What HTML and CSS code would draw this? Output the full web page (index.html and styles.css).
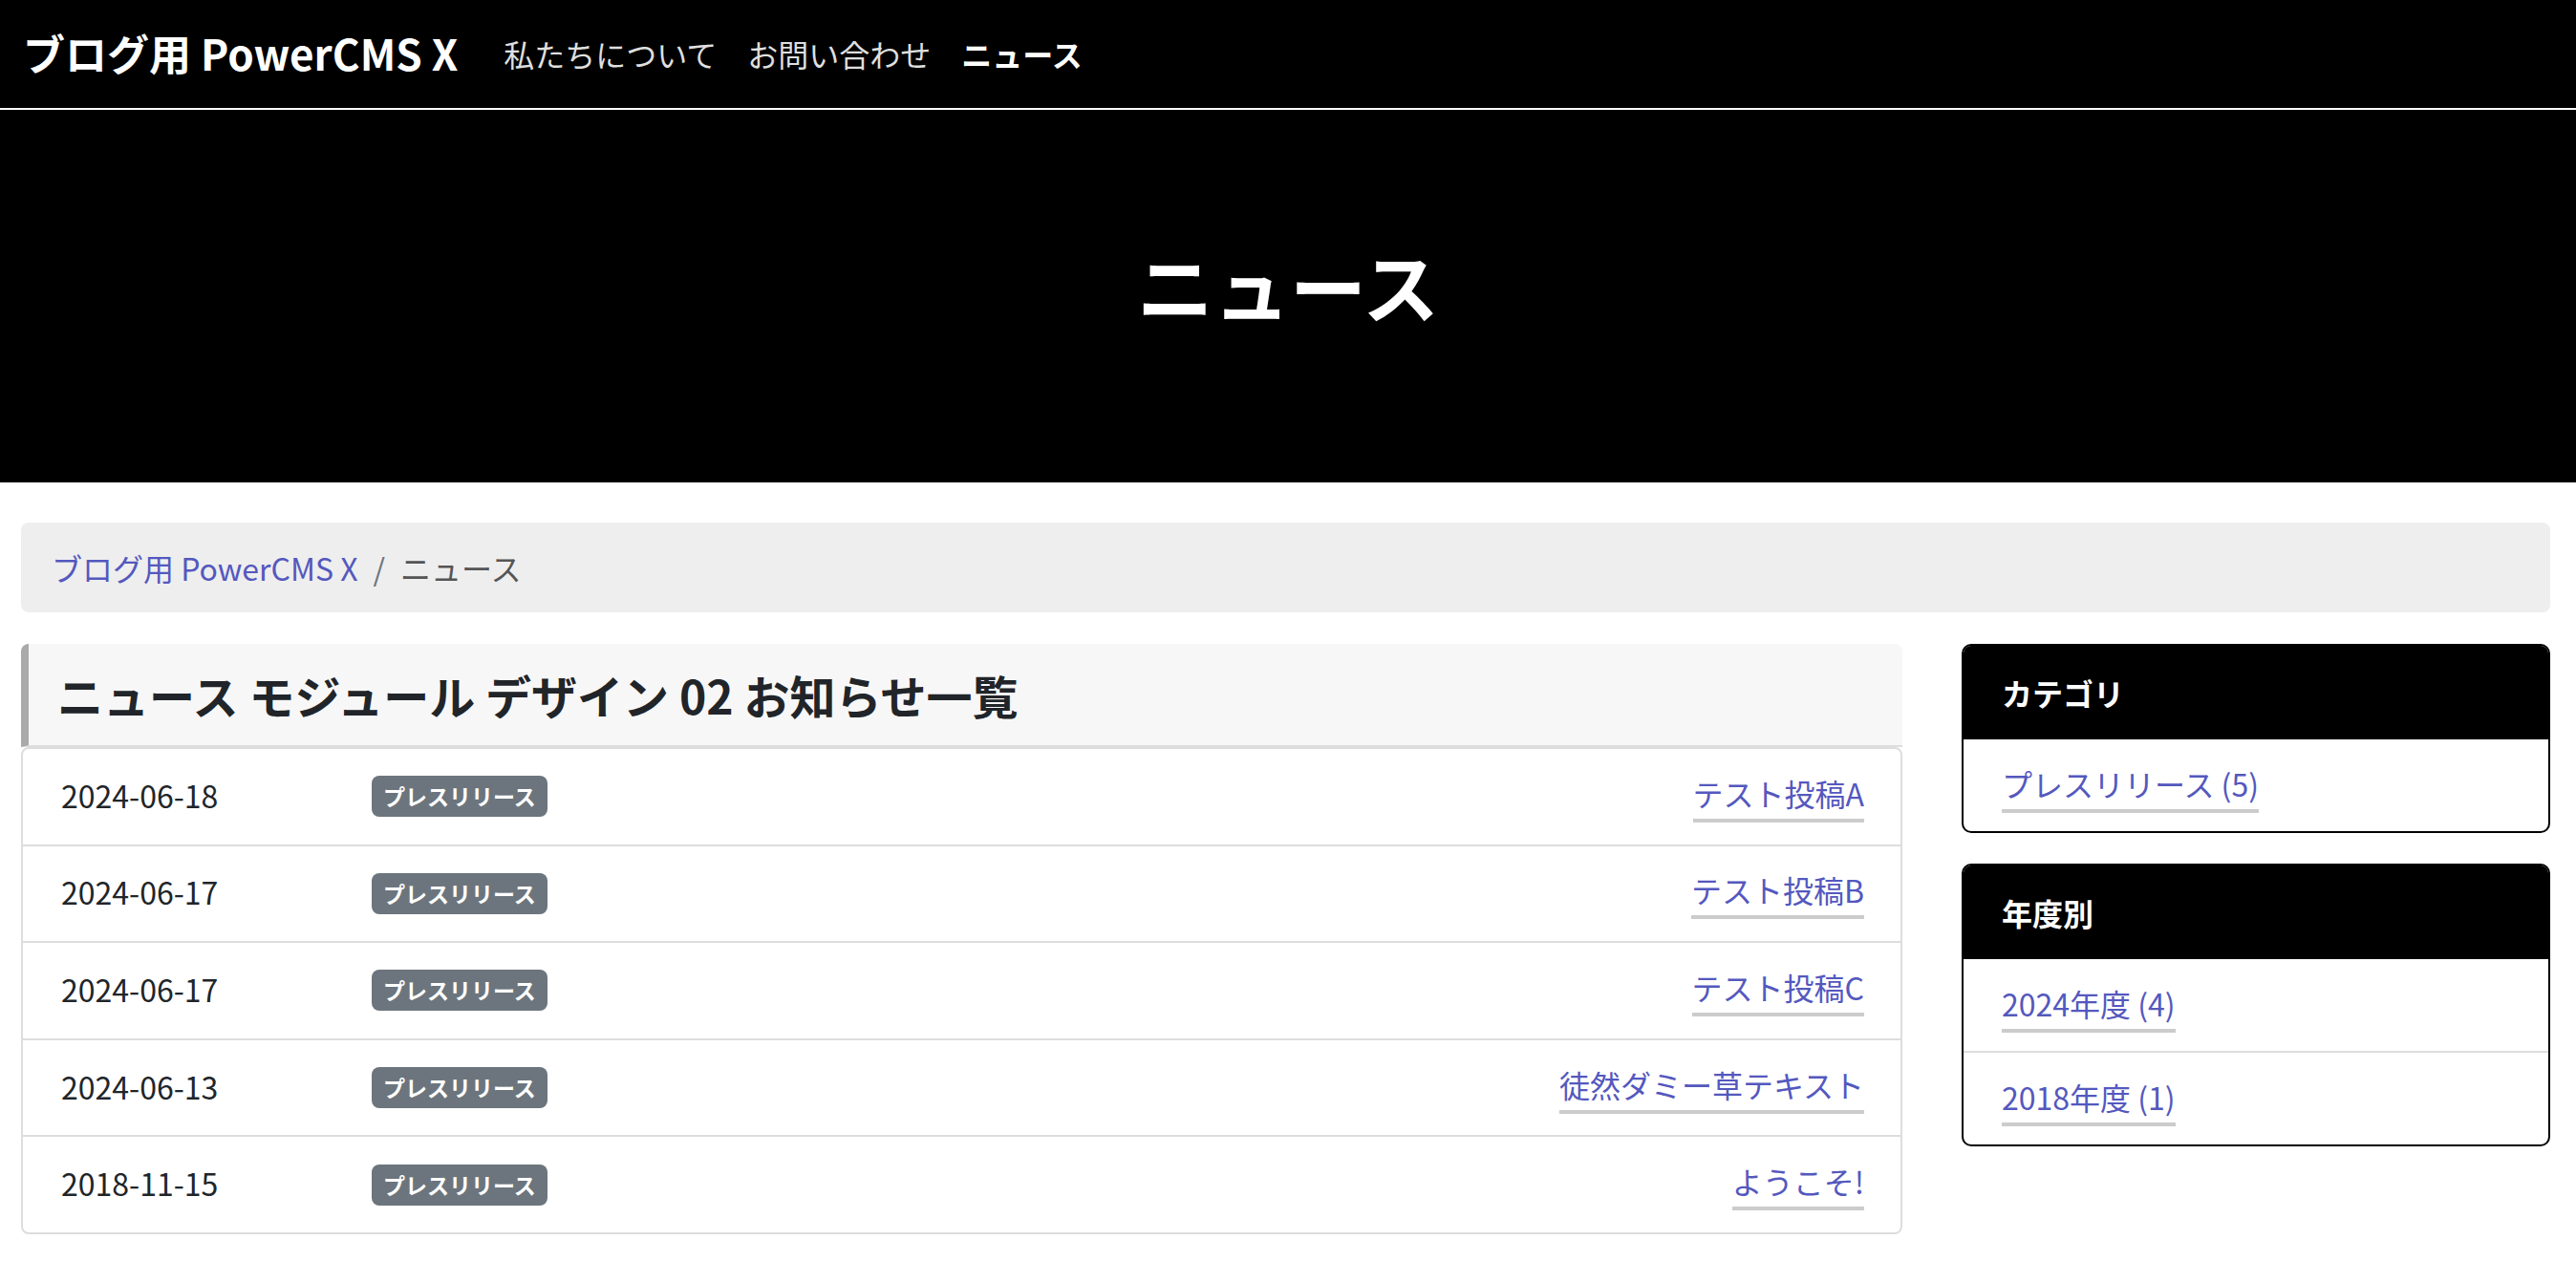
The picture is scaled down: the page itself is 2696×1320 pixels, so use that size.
FILE: index.html
```html
<!DOCTYPE html>
<html lang="ja">
<head>
<meta charset="utf-8">
<title>ニュース | ブログ用 PowerCMS X</title>
<link rel="stylesheet" href="styles.css">
</head>
<body>
<header class="navbar">
  <a class="brand" href="#">ブログ用 PowerCMS X</a>
  <nav class="nav">
    <a class="nav-link" href="#">私たちについて</a>
    <a class="nav-link" href="#">お問い合わせ</a>
    <a class="nav-link active" href="#">ニュース</a>
  </nav>
</header>
<section class="hero">
  <h1 class="hero-title">ニュース</h1>
</section>
<div class="container">
  <ol class="breadcrumb">
    <li class="crumb"><a href="#">ブログ用 PowerCMS X</a></li>
    <li class="crumb-sep">/</li>
    <li class="crumb current">ニュース</li>
  </ol>
  <div class="layout">
    <main class="main">
      <h2 class="list-title">ニュース モジュール デザイン 02 お知らせ一覧</h2>
      <ul class="news-list">
        <li class="news-row"><span class="date">2024-06-18</span><span class="badge">プレスリリース</span><a class="u-link row-link" href="#">テスト投稿A</a></li>
        <li class="news-row"><span class="date">2024-06-17</span><span class="badge">プレスリリース</span><a class="u-link row-link" href="#">テスト投稿B</a></li>
        <li class="news-row"><span class="date">2024-06-17</span><span class="badge">プレスリリース</span><a class="u-link row-link" href="#">テスト投稿C</a></li>
        <li class="news-row"><span class="date">2024-06-13</span><span class="badge">プレスリリース</span><a class="u-link row-link" href="#">徒然ダミー草テキスト</a></li>
        <li class="news-row"><span class="date">2018-11-15</span><span class="badge">プレスリリース</span><a class="u-link row-link" href="#">ようこそ!</a></li>
      </ul>
    </main>
    <aside class="sidebar">
      <section class="widget">
        <h3 class="widget-head">カテゴリ</h3>
        <ul class="widget-list">
          <li class="widget-item"><a class="u-link" href="#">プレスリリース (5)</a></li>
        </ul>
      </section>
      <section class="widget">
        <h3 class="widget-head">年度別</h3>
        <ul class="widget-list">
          <li class="widget-item"><a class="u-link" href="#">2024年度 (4)</a></li>
          <li class="widget-item"><a class="u-link" href="#">2018年度 (1)</a></li>
        </ul>
      </section>
    </aside>
  </div>
</div>
</body>
</html>
```

FILE: styles.css
```css
* { box-sizing: border-box; }

html, body {
  margin: 0;
  padding: 0;
  background: #fff;
}

body {
  font-family: "Noto Sans CJK JP", "Noto Sans", sans-serif;
  font-size: 32px;
  color: #212529;
}

a { text-decoration: none; }

.navbar {
  display: flex;
  align-items: center;
  height: 115px;
  padding: 0 24px 2px;
  background: #000;
  border-bottom: 2px solid #fff;
}

.brand {
  color: #fff;
  font-size: 44px;
  font-weight: 700;
  margin-right: 32px;
  line-height: 1.4;
}

.nav {
  display: flex;
  align-items: center;
}

.nav-link {
  color: rgba(255, 255, 255, 0.88);
  font-size: 32px;
  padding: 0 16px;
  line-height: 1.5;
}

.nav-link.active {
  color: #fff;
  font-weight: 700;
}

.hero {
  height: 390px;
  background: #000;
  display: flex;
  align-items: center;
  justify-content: center;
  padding-bottom: 26px;
}

.hero-title {
  margin: 0;
  color: #fff;
  font-size: 80px;
  font-weight: 700;
  line-height: 1.2;
}

.container {
  padding: 0 27px 0 22px;
}

.breadcrumb {
  list-style: none;
  margin: 42px 0 33px;
  height: 94px;
  padding: 0 32px;
  background: #eeeeee;
  border-radius: 8px;
  display: flex;
  align-items: center;
}

.crumb a { color: #5458be; }

.crumb-sep {
  color: #6c757d;
  padding: 0 16px;
}

.crumb.current { color: #555; }

.layout {
  display: flex;
  align-items: flex-start;
  gap: 62px;
}

.main {
  flex: 1;
  min-width: 0;
}

.list-title {
  margin: 0;
  height: 108px;
  display: flex;
  align-items: center;
  padding: 0 30px;
  font-size: 48px;
  font-weight: 700;
  background: #f7f7f7;
  border-left: 8px solid #aaaaaa;
  border-bottom: 2px solid #dddddd;
  border-radius: 8px 8px 0 0;
}

.news-list {
  list-style: none;
  margin: 0;
  padding: 0;
  border: 2px solid #dddddd;
  border-radius: 8px;
}

.news-row {
  display: flex;
  align-items: center;
  height: 99.6px;
  padding: 0 38px 0 40px;
}

.news-row + .news-row {
  border-top: 2px solid #dddddd;
  height: 101.6px;
}

.date {
  flex: 0 0 325px;
  padding-bottom: 4px;
}

.badge {
  display: inline-block;
  background: #6c757d;
  color: #fff;
  font-size: 23px;
  font-weight: 700;
  line-height: 23px;
  padding: 10px 12px;
  border-radius: 8px;
}

.u-link {
  display: inline-block;
  color: #5458be;
  line-height: 38px;
  padding-bottom: 8px;
  border-bottom: 4px solid #cccccc;
}

.row-link {
  margin-left: auto;
  margin-top: 4px;
}

.sidebar {
  flex: 0 0 616px;
  display: flex;
  flex-direction: column;
  gap: 32px;
}

.widget {
  border: 2px solid #000;
  border-radius: 10px;
  overflow: hidden;
}

.widget-head {
  margin: 0;
  height: 98px;
  display: flex;
  align-items: center;
  padding: 0 40px;
  background: #000;
  color: #fff;
  font-size: 32px;
  font-weight: 700;
}

.widget-list {
  list-style: none;
  margin: 0;
  padding: 0;
}

.widget-item {
  height: 96px;
  display: flex;
  align-items: center;
  padding: 8px 40px 0;
}

.widget-item + .widget-item {
  border-top: 2px solid #dddddd;
  height: 98px;
}
```
